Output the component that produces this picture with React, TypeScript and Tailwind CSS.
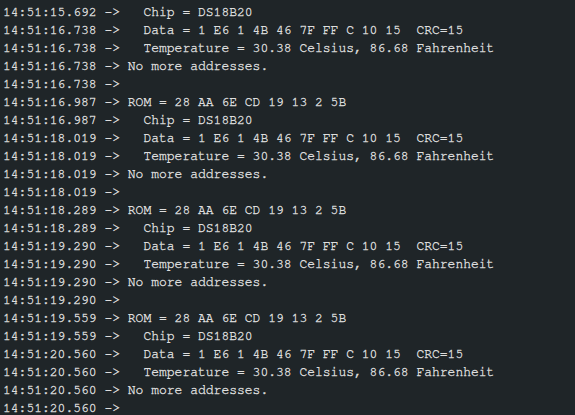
import React from "react";

const blocks = [
    { rom: "14:51:16.987", chip: "14:51:16.987", data: "14:51:18.019", temp: "14:51:18.019", none: "14:51:18.019", end: "14:51:18.019" },
    { rom: "14:51:18.289", chip: "14:51:18.289", data: "14:51:19.290", temp: "14:51:19.290", none: "14:51:19.290", end: "14:51:19.290" },
    { rom: "14:51:19.559", chip: "14:51:19.559", data: "14:51:20.560", temp: "14:51:20.560", none: "14:51:20.560", end: "14:51:20.560" },
];

const buildLines = (): string[] => {
    const lines: string[] = [
        "14:51:15.692 ->   Chip = DS18B20",
        "14:51:16.738 ->   Data = 1 E6 1 4B 46 7F FF C 10 15  CRC=15",
        "14:51:16.738 ->   Temperature = 30.38 Celsius, 86.68 Fahrenheit",
        "14:51:16.738 -> No more addresses.",
        "14:51:16.738 -> ",
    ];

    for (const b of blocks) {
        lines.push(`${b.rom} -> ROM = 28 AA 6E CD 19 13 2 5B`);
        lines.push(`${b.chip} ->   Chip = DS18B20`);
        lines.push(`${b.data} ->   Data = 1 E6 1 4B 46 7F FF C 10 15  CRC=15`);
        lines.push(`${b.temp} ->   Temperature = 30.38 Celsius, 86.68 Fahrenheit`);
        lines.push(`${b.none} -> No more addresses.`);
        lines.push(`${b.end} -> `);
    }

    return lines;
}

const App: React.FC = () => {
    const lines = buildLines();

    return (
        <div className="w-[575px] h-[415px] overflow-hidden bg-[#1f2528] pt-1 pl-[3px] [font-family:'Nimbus_Mono_PS','FreeMono','Courier','Liberation_Mono',monospace]">
            {lines.map((line, index) => (
                <div
                    key={index}
                    className="whitespace-pre text-[13px] leading-[18px] text-[#dedede] [-webkit-text-stroke:0.35px_#dedede]"
                >
                    {line}
                </div>
            ))}
        </div>
    );
}

export default App;
